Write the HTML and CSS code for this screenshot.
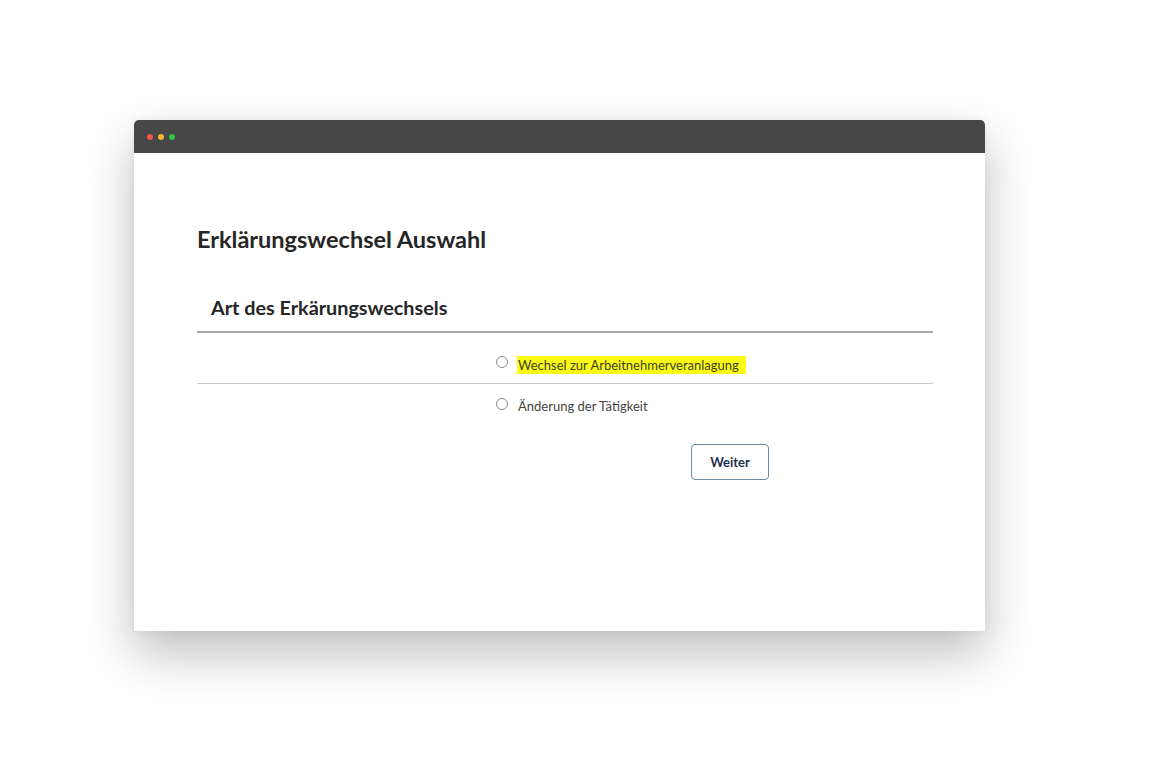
FILE: index.html
```html
<!DOCTYPE html>
<html lang="de">
<head>
<meta charset="utf-8">
<title>Erklärungswechsel Auswahl</title>
<link rel="stylesheet" href="styles.css">
</head>
<body>
<div class="window">
  <div class="titlebar">
    <span class="dot red"></span><span class="dot yellow"></span><span class="dot green"></span>
  </div>
  <div class="content">
    <h1 class="title">Erklärungswechsel Auswahl</h1>
    <h2 class="section">Art des Erkärungswechsels</h2>
    <div class="options">
      <label class="option first">
        <span class="radio"></span>
        <span class="label hl">Wechsel zur Arbeitnehmerveranlagung</span>
      </label>
      <label class="option second">
        <span class="radio"></span>
        <span class="label">Änderung der Tätigkeit</span>
      </label>
    </div>
    <div class="actions">
      <button class="btn">Weiter</button>
    </div>
  </div>
</div>
</body>
</html>
```
FILE: styles.css
```css
html, body { margin: 0; padding: 0; background: #fff; }
body {
  width: 1175px; height: 783px; overflow: hidden;
  font-family: "Source Sans Pro", "Lato", "Open Sans", sans-serif;
}
.window {
  margin: 120px 0 0 134px;
  width: 851px;
  height: 511px;
  background: #fff;
  border-radius: 5px 5px 0 0;
  box-shadow: 0 22px 50px rgba(0,0,0,0.26), 0 0 8px rgba(0,0,0,0.06);
  display: flex; flex-direction: column;
}
.titlebar {
  height: 33px;
  background: #474747;
  border-radius: 5px 5px 0 0;
  display: flex; align-items: center;
  padding-left: 13px; gap: 5px;
}
.dot { width: 6px; height: 6px; border-radius: 50%; display: block; }
.red { background: #f0544c; }
.yellow { background: #f6b931; }
.green { background: #2fc447; }
.content { padding: 71px 52px 0 63px; }
.title {
  margin: 0; font-size: 23.5px; font-weight: 700; color: #262626;
  line-height: 30px; letter-spacing: 0;
}
.section {
  margin: 40px 0 0 0; padding: 0 0 11px 14px;
  font-size: 19.8px; font-weight: 700; color: #262626; line-height: 26px;
  border-bottom: 2px solid #a8a8a8;
}
.options { display: flex; flex-direction: column; }
.option {
  display: flex; align-items: flex-start; gap: 10px;
  padding-left: 299px;
}
.option.first { padding-top: 23px; height: 27px; border-bottom: 1px solid #c8c8c8; }
.option.second { padding-top: 14px; height: 18px; }
.radio {
  width: 10px; height: 10px; border: 1.5px solid #8a8a8a; border-radius: 50%;
  box-sizing: content-box; margin-top: 0;
}
.label { font-size: 13px; color: #444; line-height: 18px; }
.second .label { margin-top: -1px; }
.hl { background: #fbfb16; padding: 0 7px 0 1px; color: #3f3f20; margin-left: -1px; }
.actions { display: flex; padding-left: 494px; padding-top: 28px; }
.btn {
  width: 78px; height: 36px; border: 1.5px solid #6a8aa6; border-radius: 4px;
  background: #fff; font-family: inherit; font-size: 13px; font-weight: 700; color: #1d3250;
}
```
